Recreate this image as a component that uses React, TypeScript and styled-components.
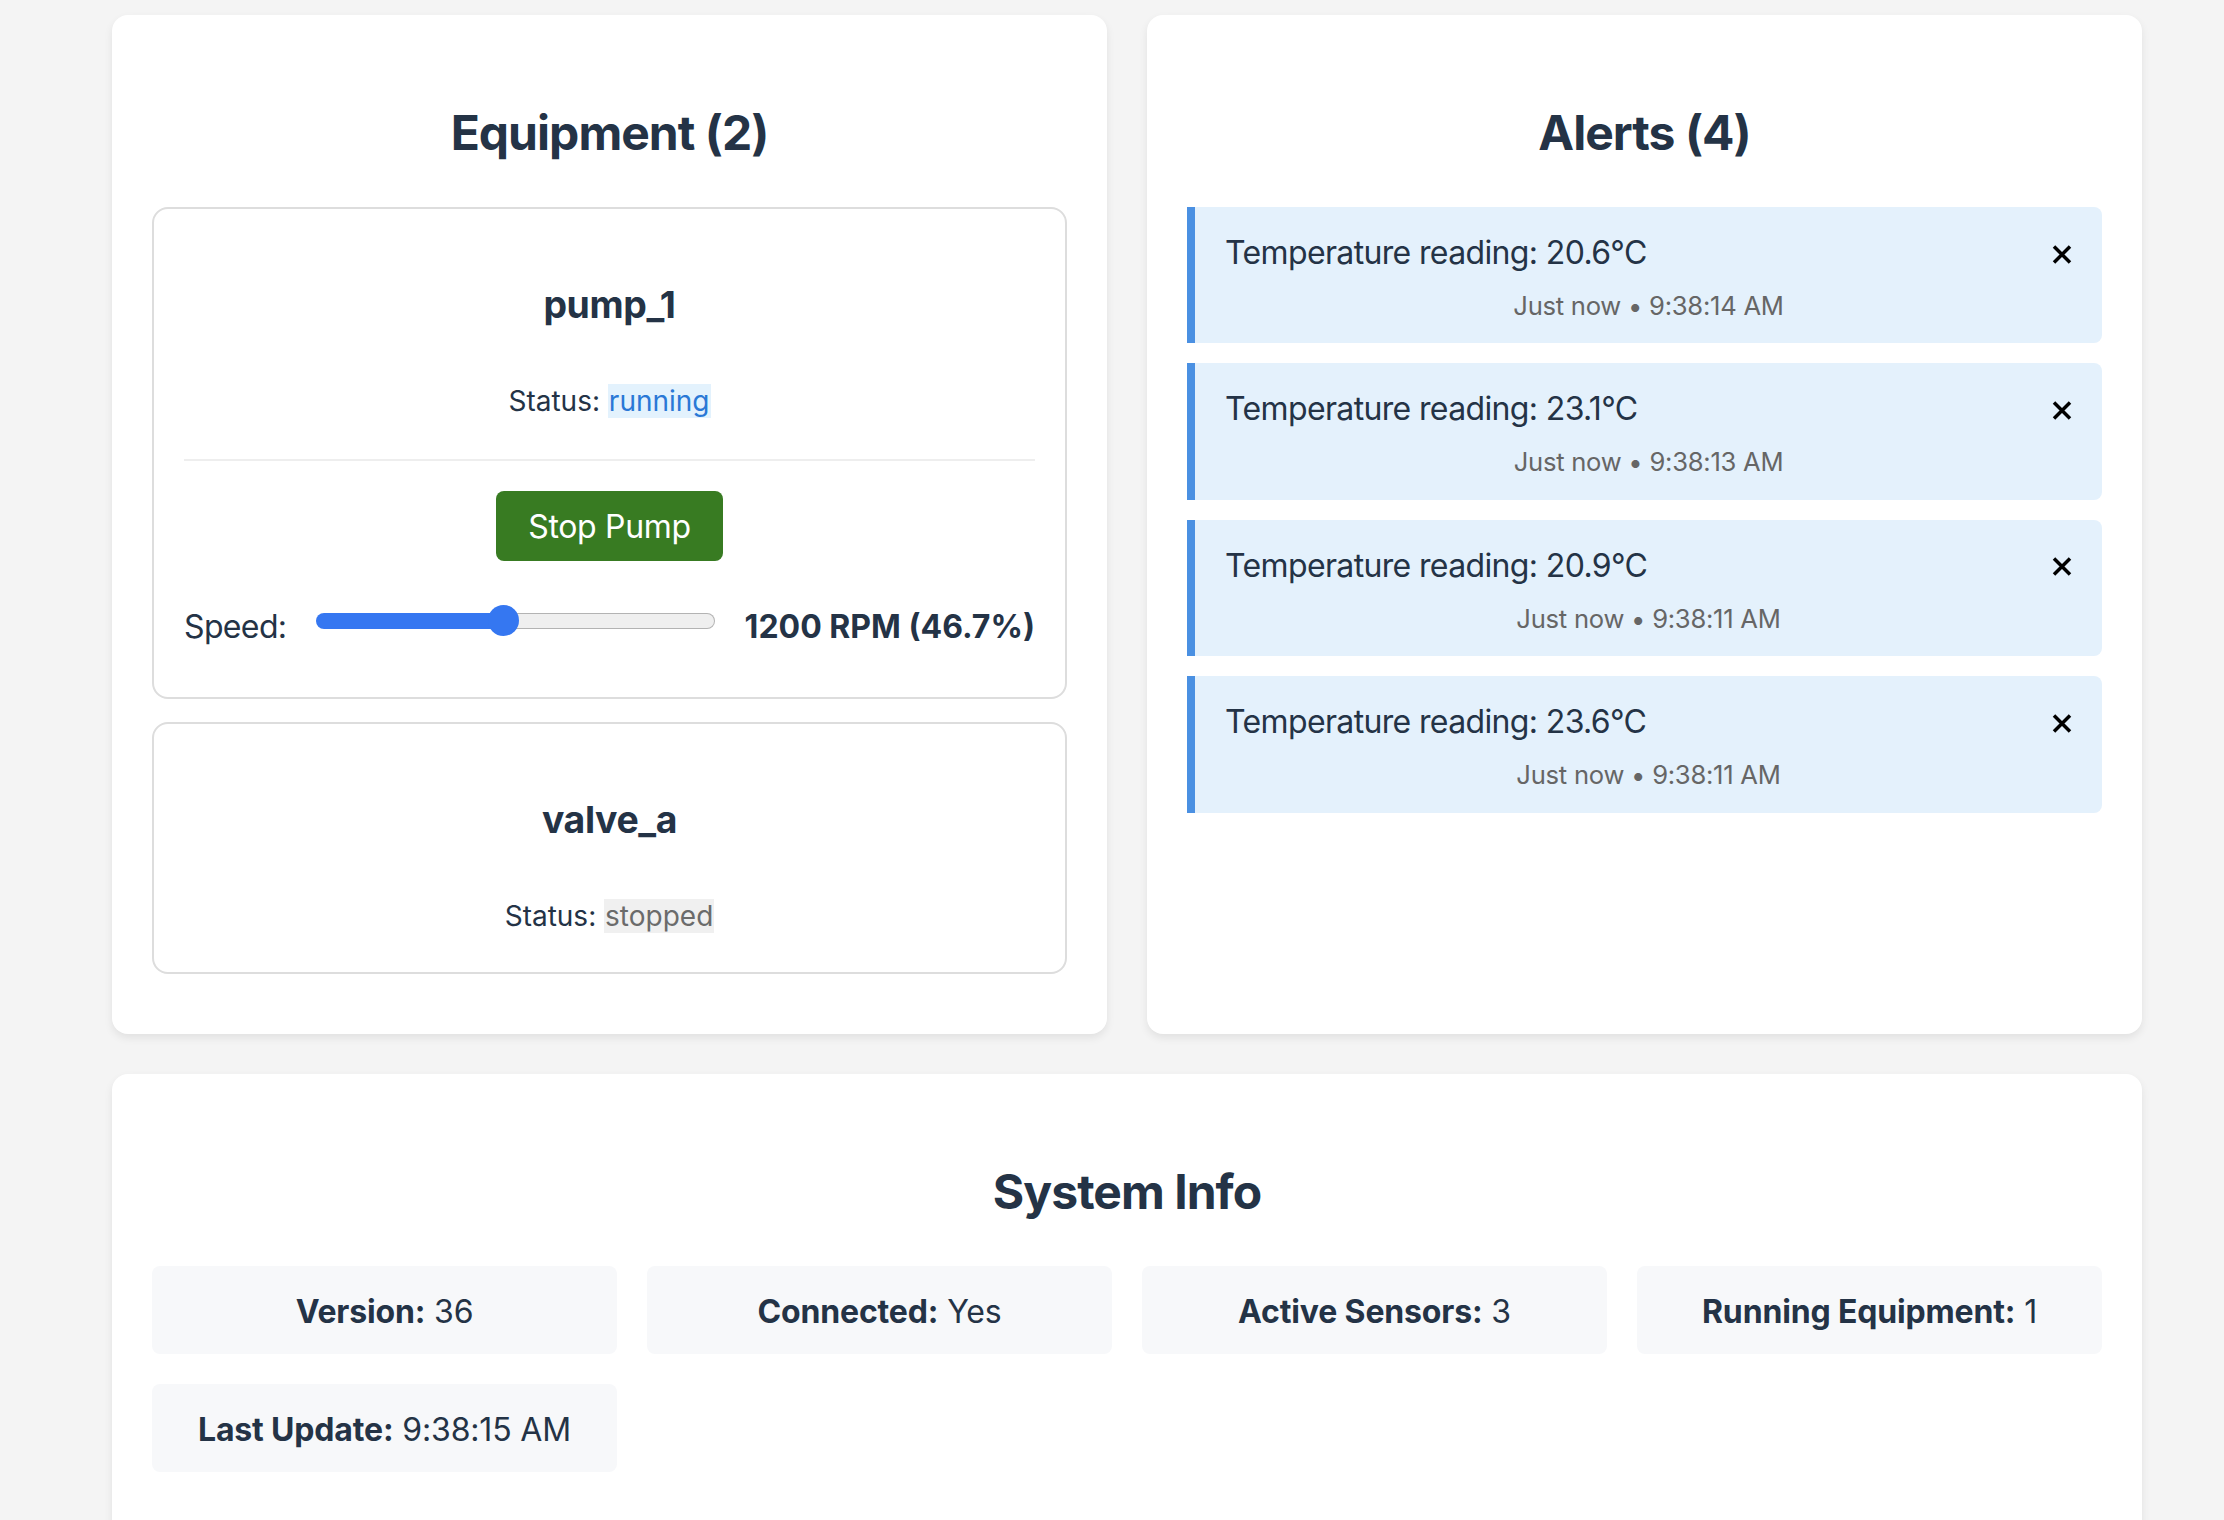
import React from "react";
import styled, { createGlobalStyle, css } from "styled-components";

const GlobalStyle = createGlobalStyle`
  html, body {
    margin: 0;
    padding: 0;
    background: #f4f4f4;
    overflow: hidden;
  }
  body {
    font-family: Inter, "Noto Sans", sans-serif;
    color: #243346;
    font-size: 32px;
    line-height: 1.5;
  }
  * { box-sizing: border-box; }
`;

const Page = styled.div`
  width: 2030px;
  margin-left: 112px;
  padding-top: 15px;
  display: flex;
  flex-direction: column;
  gap: 40px;
`;

const TopGrid = styled.div`
  display: grid;
  grid-template-columns: 1fr 1fr;
  gap: 40px;
`;

const Card = styled.section`
  background: #ffffff;
  border-radius: 16px;
  padding: 40px;
  box-shadow: 0 4px 8px rgba(0, 0, 0, 0.08);
`;

const CardTitle = styled.h2`
  margin: 42px 0 38px;
  font-size: 48px;
  line-height: 72px;
  font-weight: 700;
  text-align: center;
  letter-spacing: -0.02em;
`;

const EquipmentList = styled.div`
  display: flex;
  flex-direction: column;
  gap: 23px;
  padding-bottom: 20px;
`;

const EquipmentBox = styled.div`
  border: 2px solid #dddddd;
  border-radius: 16px;
  padding: 30px;
  display: flex;
  flex-direction: column;
  text-align: center;
`;

const EquipmentName = styled.h3`
  margin: 39px 0 0;
  font-size: 37.4px;
  line-height: 54px;
  font-weight: 700;
  letter-spacing: -0.01em;
`;

const StatusLine = styled.p`
  margin: 48px 0 5px;
  font-size: 28px;
  line-height: 42px;
`;

const StatusBadge = styled.span<{ $status: "running" | "stopped" }>`
  padding: 0 1px;
  ${(p) =>
    p.$status === "running"
      ? css`
          color: #2a78d6;
          background: #e3f2fd;
        `
      : css`
          color: #6b6b6b;
          background: #f0f0f0;
        `}
`;

const Controls = styled.div`
  margin-top: 32px;
  border-top: 2px solid #eeeeee;
  padding-top: 30px;
  display: flex;
  flex-direction: column;
  align-items: center;
`;

const StopButton = styled.button`
  background: #387b22;
  color: #ffffff;
  border: none;
  border-radius: 8px;
  padding: 17px 32px 15px;
  font-family: inherit;
  font-size: 32px;
  line-height: 38px;
  letter-spacing: -0.01em;
  cursor: pointer;
`;

const SpeedRow = styled.div`
  align-self: stretch;
  display: flex;
  align-items: center;
  gap: 30px;
  height: 56px;
  margin: 38px 0 12px;
  text-align: left;
`;

const SpeedLabel = styled.span`
  font-size: 32px;
  letter-spacing: -0.02em;
`;

const SpeedValue = styled.strong`
  font-size: 32px;
  font-weight: 700;
  white-space: nowrap;
`;

const Slider = styled.input`
  -webkit-appearance: none;
  appearance: none;
  flex: 1;
  min-width: 0;
  height: 31px;
  margin: 0 0 12px;
  background: transparent;

  &::-webkit-slider-runnable-track {
    height: 16px;
    border-radius: 8px;
    border: 1.5px solid transparent;
    background:
      linear-gradient(
          to right,
          #3577f1 calc(15.5px + var(--f) * (100% - 31px)),
          transparent calc(15.5px + var(--f) * (100% - 31px))
        )
        border-box,
      linear-gradient(#efefef, #efefef) padding-box,
      linear-gradient(#b3b3b3, #b3b3b3) border-box;
  }

  &::-webkit-slider-thumb {
    -webkit-appearance: none;
    appearance: none;
    width: 31px;
    height: 31px;
    margin-top: -9px;
    border-radius: 50%;
    background: #3577f1;
    border: none;
  }
`;

const AlertList = styled.div`
  display: flex;
  flex-direction: column;
  gap: 20px;
`;

const AlertItem = styled.div`
  background: #e4f1fc;
  border-left: 8px solid #4a90e2;
  border-radius: 0 8px 8px 0;
  padding: 22px 30px 18px;
`;

const AlertHeader = styled.div`
  display: flex;
  justify-content: space-between;
  align-items: center;
  height: 48px;
`;

const AlertMessage = styled.span`
  font-size: 32px;
  line-height: 48px;
  letter-spacing: -0.02em;
`;

const CloseButton = styled.button`
  background: none;
  border: none;
  padding: 0;
  margin-top: 2px;
  width: 20px;
  height: 19px;
  display: flex;
  cursor: pointer;
`;

const AlertTime = styled.div`
  margin-top: 10px;
  font-size: 25.6px;
  line-height: 38.4px;
  color: #666666;
  text-align: center;
  letter-spacing: -0.01em;
`;

const InfoGrid = styled.div`
  display: grid;
  grid-template-columns: repeat(4, 1fr);
  gap: 30px;
  margin-bottom: 60px;
`;

const InfoItem = styled.div`
  background: #f7f8fa;
  border-radius: 8px;
  padding: 22px 20px 18px;
  text-align: center;
  font-size: 32px;
  line-height: 48px;
  letter-spacing: -0.005em;
`;

const InfoKey = styled.strong`
  font-weight: 700;
`;

const CloseIcon = () => (
  <svg width="20" height="19" viewBox="0 0 20 19" aria-hidden="true">
    <path d="M2 1.5 L18 17.5 M18 1.5 L2 17.5" stroke="#000" strokeWidth="3.5" fill="none" />
  </svg>
);

const alerts = [
  { msg: "Temperature reading: 20.6°C", time: "9:38:14 AM" },
  { msg: "Temperature reading: 23.1°C", time: "9:38:13 AM" },
  { msg: "Temperature reading: 20.9°C", time: "9:38:11 AM" },
  { msg: "Temperature reading: 23.6°C", time: "9:38:11 AM" },
];

const info = [
  { k: "Version:", v: "36" },
  { k: "Connected:", v: "Yes" },
  { k: "Active Sensors:", v: "3" },
  { k: "Running Equipment:", v: "1" },
  { k: "Last Update:", v: "9:38:15 AM" },
];

export default function App() {
  const min = 500;
  const max = 2000;
  const speed = 1200;
  const frac = (speed - min) / (max - min);

  return (
    <>
      <GlobalStyle />
      <Page>
        <TopGrid>
          <Card>
            <CardTitle>Equipment (2)</CardTitle>
            <EquipmentList>
              <EquipmentBox>
                <EquipmentName>pump_1</EquipmentName>
                <StatusLine>
                  Status: <StatusBadge $status="running">running</StatusBadge>
                </StatusLine>
                <Controls>
                  <StopButton>Stop Pump</StopButton>
                  <SpeedRow>
                    <SpeedLabel>Speed:</SpeedLabel>
                    <Slider
                      type="range"
                      min={min}
                      max={max}
                      defaultValue={speed}
                      style={{ ["--f" as string]: frac.toFixed(4) } as React.CSSProperties}
                    />
                    <SpeedValue>1200 RPM (46.7%)</SpeedValue>
                  </SpeedRow>
                </Controls>
              </EquipmentBox>
              <EquipmentBox>
                <EquipmentName>valve_a</EquipmentName>
                <StatusLine>
                  Status: <StatusBadge $status="stopped">stopped</StatusBadge>
                </StatusLine>
              </EquipmentBox>
            </EquipmentList>
          </Card>
          <Card>
            <CardTitle>Alerts (4)</CardTitle>
            <AlertList>
              {alerts.map((a, i) => (
                <AlertItem key={i}>
                  <AlertHeader>
                    <AlertMessage>{a.msg}</AlertMessage>
                    <CloseButton aria-label="Dismiss">
                      <CloseIcon />
                    </CloseButton>
                  </AlertHeader>
                  <AlertTime>Just now • {a.time}</AlertTime>
                </AlertItem>
              ))}
            </AlertList>
          </Card>
        </TopGrid>
        <Card>
          <CardTitle>System Info</CardTitle>
          <InfoGrid>
            {info.map((it) => (
              <InfoItem key={it.k}>
                <InfoKey>{it.k}</InfoKey> {it.v}
              </InfoItem>
            ))}
          </InfoGrid>
        </Card>
      </Page>
    </>
  );
}
